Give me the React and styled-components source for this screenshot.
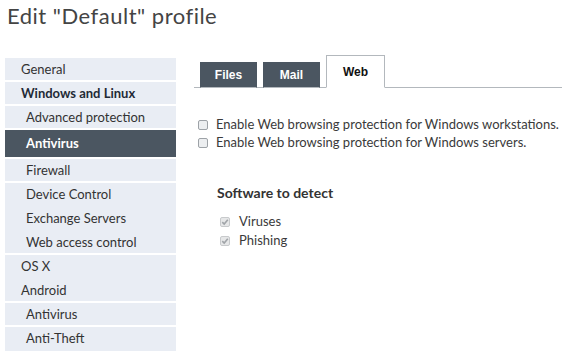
import React from 'react';
import styled, { createGlobalStyle } from 'styled-components';

const GlobalStyle = createGlobalStyle`
  body {
    margin: 0;
    background: #fff;
    font-family: Lato, "Open Sans", sans-serif;
    color: #333;
  }
`;

const menu = [
  { label: 'General', level: 0, sep: true },
  { label: 'Windows and Linux', level: 0, bold: true, sep: true },
  { label: 'Advanced protection', level: 1, sep: true },
  { label: 'Antivirus', level: 1, active: true, sep: true },
  { label: 'Firewall', level: 1, sep: true },
  { label: 'Device Control', level: 1, sep: false },
  { label: 'Exchange Servers', level: 1, sep: false },
  { label: 'Web access control', level: 1, sep: true },
  { label: 'OS X', level: 0, sep: false },
  { label: 'Android', level: 0, sep: true },
  { label: 'Antivirus', level: 1, sep: true },
  { label: 'Anti-Theft', level: 1, sep: false }
];

class App extends React.Component {
  state = {
    tab: 'Web'
  };

  render() {
    return (
      <Page>
        <GlobalStyle />
        <Title>Edit "Default" profile</Title>
        <Body>
          <Sidebar>
            {menu.map((item, i) => (
              <MenuItem
                key={i}
                level={item.level}
                bold={item.bold}
                active={item.active}
                sep={item.sep}
              >
                {item.label}
              </MenuItem>
            ))}
          </Sidebar>
          <Main>
            <Tabs>
              {['Files', 'Mail', 'Web'].map(t => (
                <Tab
                  key={t}
                  selected={this.state.tab === t}
                  onClick={() => this.setState({ tab: t })}
                >
                  {t}
                </Tab>
              ))}
            </Tabs>
            <Options>
              <Check>
                <Box />
                Enable Web browsing protection for Windows workstations.
              </Check>
              <Check>
                <Box />
                Enable Web browsing protection for Windows servers.
              </Check>
            </Options>
            <Section>
              <SectionTitle>Software to detect</SectionTitle>
              <Check>
                <Box checked disabled />
                Viruses
              </Check>
              <Check>
                <Box checked disabled />
                Phishing
              </Check>
            </Section>
          </Main>
        </Body>
      </Page>
    );
  }
}

const Box = ({ checked, disabled }) => (
  <BoxWrap disabled={disabled}>
    {checked && (
      <svg width="8" height="8" viewBox="0 0 8 8">
        <path
          d="M1.3 4.2 L3.2 6 L6.8 1.8"
          fill="none"
          stroke="#a0a4a8"
          strokeWidth="1.6"
        />
      </svg>
    )}
  </BoxWrap>
);

const Page = styled.div`
  width: 562px;
  height: 362px;
  overflow: hidden;
`;

const Title = styled.h1`
  margin: 0;
  padding: 2px 0 0 7px;
  font-size: 22px;
  letter-spacing: 0.5px;
  font-weight: 400;
  color: #444;
  line-height: 28px;
`;

const Body = styled.div`
  display: flex;
  margin-top: 28px;
`;

const Sidebar = styled.div`
  width: 171px;
  margin-left: 5px;
  display: flex;
  flex-direction: column;
`;

const MenuItem = styled.div`
  background: ${p => (p.active ? '#4b5661' : '#e9edf4')};
  color: ${p => (p.active ? '#fff' : p.bold ? '#1f2a36' : '#333')};
  font-weight: ${p => (p.active || p.bold ? 700 : 400)};
  font-size: 13px;
  height: ${p => (p.active ? 27 : 22)}px;
  line-height: ${p => (p.active ? 27 : 22)}px;
  padding-left: ${p => (p.level ? 21 : 16)}px;
  border-bottom: ${p => (p.sep ? '2px solid #fff' : '2px solid #e9edf4')};
`;

const Main = styled.div`
  flex: 1;
  padding-left: 18px;
`;

const Tabs = styled.div`
  display: flex;
  align-items: flex-end;
  gap: 6px;
  margin-top: -3px;
  padding-left: 6px;
  border-bottom: 1px solid #b3b8bd;
  height: 32px;
`;

const Tab = styled.div`
  box-sizing: border-box;
  width: ${p => (p.selected ? 59 : 57)}px;
  height: ${p => (p.selected ? 33 : 26)}px;
  margin-bottom: -1px;
  background: ${p => (p.selected ? '#fff' : '#4b5661')};
  color: ${p => (p.selected ? '#111' : '#fff')};
  border: 1px solid ${p => (p.selected ? '#b3b8bd' : '#4b5661')};
  border-bottom: ${p => (p.selected ? '1px solid #fff' : '1px solid #b3b8bd')};
  font-family: "Liberation Sans", Arial, sans-serif;
  font-weight: 700;
  font-size: 12px;
  display: flex;
  align-items: ${p => (p.selected ? 'flex-start' : 'center')};
  padding-top: ${p => (p.selected ? 9 : 0)}px;
  justify-content: center;
  cursor: pointer;
`;

const Options = styled.div`
  margin-top: 29px;
  display: flex;
  flex-direction: column;
  gap: 3px;
`;

const Check = styled.label`
  display: flex;
  align-items: center;
  gap: 8px;
  font-size: 13px;
  line-height: 15px;
  color: #3a3a3a;
`;

const BoxWrap = styled.span`
  box-sizing: border-box;
  flex: none;
  width: 10px;
  height: 10px;
  border: 1px solid #9da2a7;
  border-radius: 2px;
  background: ${p => (p.disabled ? '#e6e7e8' : '#eceef0')};
  border-color: ${p => (p.disabled ? '#c8cacc' : '#9da2a7')};
  display: inline-flex;
  align-items: center;
  justify-content: center;
  margin-left: 4px;
`;

const Section = styled.div`
  margin-top: 35px;
  padding-left: 23px;
  display: flex;
  flex-direction: column;
  gap: 4px;

  ${Check} {
    gap: 9px;
  }

  ${BoxWrap} {
    margin-left: 3px;
  }
`;

const SectionTitle = styled.div`
  font-size: 14px;
  line-height: 16px;
  font-weight: 700;
  color: #333;
  margin-bottom: 9px;
`;

export default App;
